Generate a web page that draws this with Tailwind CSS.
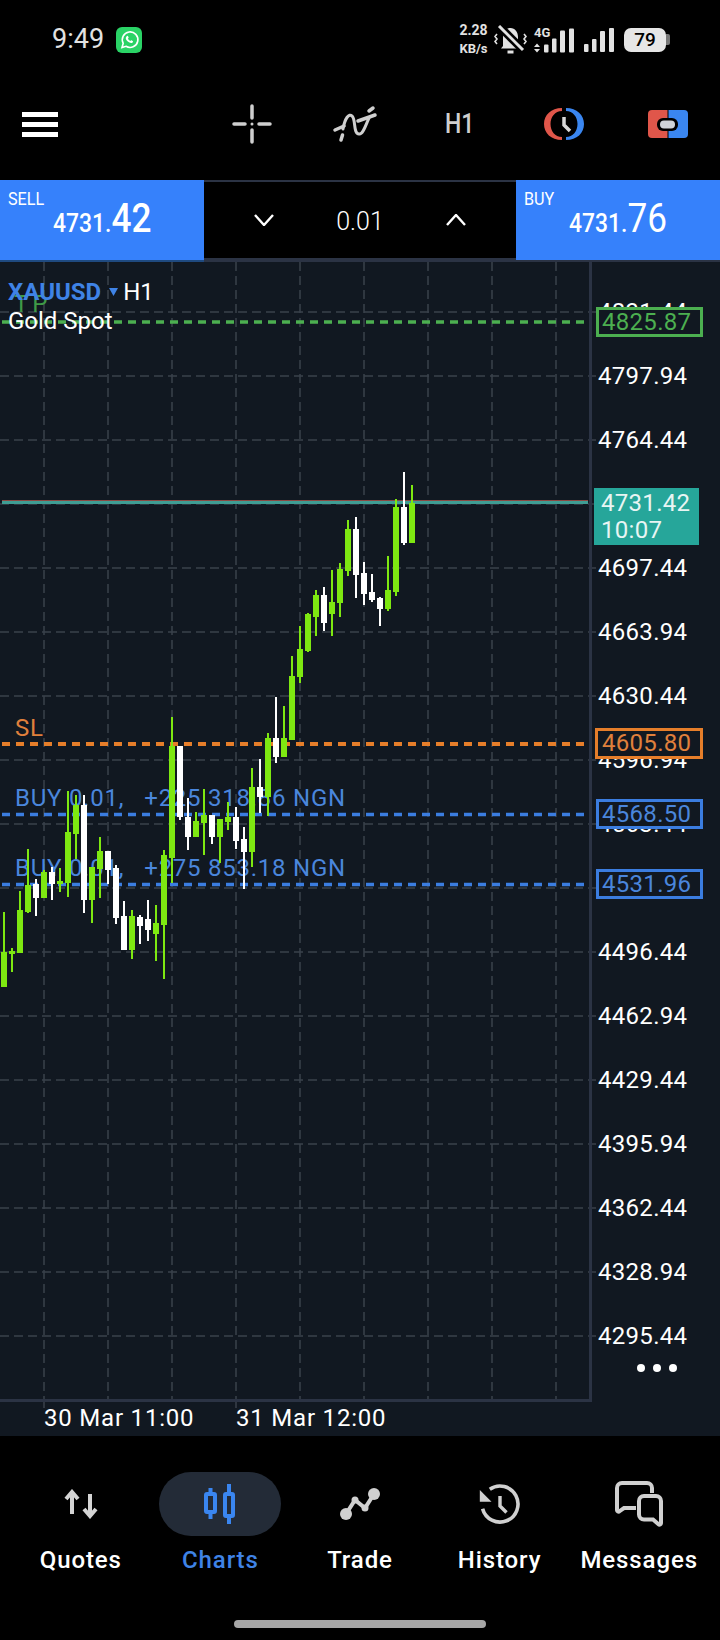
<!DOCTYPE html>
<html lang="en">
<head>
    <meta charset="UTF-8">
    <meta name="viewport" content="width=device-width, initial-scale=1.0">
    <title>XAUUSD H1 Chart</title>
    <script src="https://cdn.jsdelivr.net/npm/@tailwindcss/browser@4"></script>
</head>
<body class="w-[720px] h-[1640px] overflow-hidden bg-black text-white font-['Roboto',sans-serif]">
    <!-- Status bar -->
    <div class="h-[68px] flex items-center justify-between pl-[52px] pr-[50px] pt-[11px] text-[#e2e2e2]">
        <div class="flex items-center gap-[12px]">
            <span class="text-[27px] leading-none">9:49</span>
            <svg width="26" height="26" viewBox="0 0 26 26">
                <rect width="26" height="26" rx="6" fill="#2ad366"/>
                <path d="M6 20.5l1.2-4.2A7.8 7.8 0 1 1 10 19.3z" fill="none" stroke="#fff" stroke-width="1.6"/>
                <path d="M10.5 9.5c.6-1 1.4-.8 1.7 0l.4 1c.1.4-.5 1-.7 1.3.5 1 1.3 1.8 2.4 2.3.4-.3.8-.9 1.2-.8l1.2.6c.5.3.4 1-.1 1.5-1 1-3 .6-4.8-.8-1.9-1.5-2.8-3.7-1.3-5.1z" fill="#fff"/>
            </svg>
        </div>
        <div class="flex items-center">
            <div class="w-[29px] text-[14px] leading-[18px] font-bold text-center">2.28<br><span class="text-[13px]">KB/s</span></div>
            <svg class="ml-[6px]" width="33" height="30" viewBox="0 0 33 30" fill="none" stroke="#e2e2e2">
                <path d="M9 21v-9c0-5 3-9 7.500-9S24 7 24 12v9l2 2.500H7z" fill="#e2e2e2" stroke="none"/>
                <path d="M13.500 27h6" stroke-width="3"/>
                <path d="M5 1l24 24" stroke="#000" stroke-width="8"/>
                <path d="M5 1l24 24" stroke-width="3"/>
                <path d="M3 9l-2 2.500 2 2.500-2 2.500 2 2.500M30 9l2 2.500-2 2.500 2 2.500-2 2.500" stroke-width="1.6"/>
            </svg>
            <div class="relative ml-[7px] w-[42px] h-[28px]">
                <span class="absolute left-0 top-0 text-[13px] font-bold leading-none">4G</span>
                <svg width="42" height="28" viewBox="0 0 42 28" fill="#e2e2e2">
                    <path d="M3 17.500l3 3.500H0zM3 26.500L0 23h6z"/>
                    <rect x="10" y="18.500" width="4.500" height="8" rx="1"/>
                    <rect x="18" y="12.500" width="4.500" height="14" rx="1"/>
                    <rect x="26" y="4.500" width="5" height="22" rx="1"/>
                    <rect x="35" y="2.500" width="5" height="24" rx="1"/>
                </svg>
            </div>
            <svg class="ml-[8px]" width="31" height="25" viewBox="0 0 31 25" fill="#e2e2e2">
                <rect x="0" y="17" width="4.500" height="8" rx="1"/>
                <rect x="8" y="12" width="4.500" height="13" rx="1"/>
                <rect x="16" y="4" width="5" height="21" rx="1"/>
                <rect x="25" y="1" width="5" height="24" rx="1"/>
            </svg>
            <div class="ml-[9px] flex items-center">
                <div class="w-[42px] h-[24px] rounded-[7px] bg-[#e6e6e6] text-black text-[19px] font-medium leading-[24px] text-center">79</div>
                <div class="w-[4px] h-[11px] rounded-r-[2px] bg-[#777]"></div>
            </div>
        </div>
    </div>

    <!-- Toolbar -->
    <div class="relative h-[112px]">
        <div class="absolute left-[22px] top-[44px] w-[36px] flex flex-col gap-[5px]">
            <div class="h-[5px] bg-white"></div>
            <div class="h-[5px] bg-white"></div>
            <div class="h-[5px] bg-white"></div>
        </div>
        <svg class="absolute left-[232px] top-[36px]" width="40" height="40" viewBox="0 0 40 40" fill="none" stroke="#cfcfcf" stroke-width="3.500" stroke-linecap="round">
            <path d="M20 2v12M20 26v12M2 20h11M27 20h11"/>
            <circle cx="20" cy="20" r="1.500" fill="#cfcfcf" stroke="none"/>
        </svg>
        <svg class="absolute left-[332px] top-[36px]" width="46" height="40" viewBox="0 0 46 40" fill="none" stroke="#cfcfcf" stroke-width="3.500" stroke-linecap="round">
            <path d="M3 26l9-4M26 17l17-6M37 7l4-3M9 36l1.500-5"/>
            <path d="M11 25C13 14 17 9 20 12c4 3 1 18 7 18 4 1 7-10 10-16" stroke-width="3"/>
        </svg>
        <div class="absolute left-[445px] top-[42px] text-[28px] leading-[28px] font-medium text-[#cfcfcf] scale-x-[0.82] origin-left">H1</div>
        <svg class="absolute left-[543px] top-[38px]" width="42" height="36" viewBox="0 0 42 36">
            <path d="M19 2C8 2 1 9 1 18s7 16 18 16v-3C12 31 7.500 25 7.500 18S12 5 19 5z" fill="#e0564a"/>
            <path d="M23 2c11 0 18 7 18 16s-7 16-18 16v-3c7 0 11.500-6 11.500-13S30 5 23 5z" fill="#3a86f0"/>
            <path d="M21 11v8l6 6" fill="none" stroke="#d8d8d8" stroke-width="3.500"/>
        </svg>
        <svg class="absolute left-[648px] top-[42px]" width="40" height="28" viewBox="0 0 40 28">
            <path d="M4 0h15.500v28H4a4 4 0 0 1-4-4V4a4 4 0 0 1 4-4z" fill="#e0564a"/>
            <path d="M20.500 0H36a4 4 0 0 1 4 4v20a4 4 0 0 1-4 4H20.500z" fill="#3a86f0"/>
            <rect x="9" y="8" width="21" height="13" rx="6" fill="#000"/>
            <rect x="12" y="10.500" width="15" height="8" rx="4" fill="#cfd3d8"/>
        </svg>
    </div>

    <!-- Trade bar -->
    <div class="h-[80px] flex">
        <div class="relative w-[204px] bg-[#3681fb]">
            <div class="absolute left-[8px] top-[8px] text-[19px] leading-[21px] scale-x-[0.85] origin-left">SELL</div>
            <div class="absolute left-[53px] top-[17px] flex items-baseline scale-x-[0.88] origin-left whitespace-nowrap">
                <span class="text-[26px] font-medium leading-[44px]">4731.</span><span class="text-[40px] font-medium leading-[44px]">42</span>
            </div>
        </div>
        <div class="flex-1 bg-black border-t-2 border-b-2 border-[#2b3344] flex items-center justify-between px-[50px]">
            <svg width="20" height="12" viewBox="0 0 20 12" fill="none" stroke="#fff" stroke-width="2.400"><path d="M1 1l9 10 9-10"/></svg>
            <span class="pt-[3px] text-[25px] font-light leading-none">0.01</span>
            <svg width="20" height="12" viewBox="0 0 20 12" fill="none" stroke="#fff" stroke-width="2.400"><path d="M1 11l9-10 9 10"/></svg>
        </div>
        <div class="relative w-[204px] bg-[#3681fb]">
            <div class="absolute left-[8px] top-[8px] text-[19px] leading-[21px] scale-x-[0.85] origin-left">BUY</div>
            <div class="absolute left-[53px] top-[17px] flex items-baseline scale-x-[0.88] origin-left whitespace-nowrap">
                <span class="text-[26px] font-medium leading-[44px]">4731.</span><span class="text-[40px] leading-[44px]">76</span>
            </div>
        </div>
    </div>

    <!-- Chart -->
    <div class="relative h-[1176px] bg-[#111821]">
        <svg id="chart" class="absolute inset-0" width="720" height="1176" viewBox="0 260 720 1176"></svg>

        <!-- Price axis labels -->
        <div class="absolute left-[598px] top-[20px] flex flex-col text-[24px] tracking-[0.3px] text-white">
            <div class="h-16 flex items-center">4831.44</div>
            <div class="h-16 flex items-center">4797.94</div>
            <div class="h-16 flex items-center">4764.44</div>
            <div class="h-16 flex items-center">4730.94</div>
            <div class="h-16 flex items-center">4697.44</div>
            <div class="h-16 flex items-center">4663.94</div>
            <div class="h-16 flex items-center">4630.44</div>
            <div class="h-16 flex items-center">4596.94</div>
            <div class="h-16 flex items-center">4563.44</div>
            <div class="h-16 flex items-center">4529.94</div>
            <div class="h-16 flex items-center">4496.44</div>
            <div class="h-16 flex items-center">4462.94</div>
            <div class="h-16 flex items-center">4429.44</div>
            <div class="h-16 flex items-center">4395.94</div>
            <div class="h-16 flex items-center">4362.44</div>
            <div class="h-16 flex items-center">4328.94</div>
            <div class="h-16 flex items-center">4295.44</div>
        </div>

        <!-- Price tags over the axis -->
        <div class="absolute left-[596px] top-[47px] w-[107px] h-[30px] border-[3px] border-[#4caf50] bg-[#111821] text-[#4caf50] text-[24px] tracking-[0.3px] leading-[24px] pl-[3px]">4825.87</div>
        <div class="absolute left-[594px] top-[228px] w-[105px] h-[57px] bg-[#26a69a] text-[#e8f5f3] text-[24px] tracking-[0.3px] leading-[27px] pl-[7px] pt-[2px]">4731.42<br>10:07</div>
        <div class="absolute left-[595px] top-[468px] w-[108px] h-[31px] border-[3px] border-[#e67e2a] bg-[#111821] text-[#e0803c] text-[24px] tracking-[0.3px] leading-[25px] pl-[4px]">4605.80</div>
        <div class="absolute left-[596px] top-[539px] w-[107px] h-[30px] border-[3px] border-[#3b7de0] bg-[#111821] text-[#4a86dc] text-[24px] tracking-[0.3px] leading-[24px] pl-[3px]">4568.50</div>
        <div class="absolute left-[596px] top-[609px] w-[107px] h-[30px] border-[3px] border-[#3b7de0] bg-[#111821] text-[#4a86dc] text-[24px] tracking-[0.3px] leading-[24px] pl-[3px]">4531.96</div>

        <!-- Symbol caption -->
        <div class="absolute left-[8px] top-[18px] flex items-center h-[28px]">
            <span class="text-[24px] font-bold text-[#3f83e6] leading-none">XAUUSD</span>
            <svg class="ml-[8px]" width="9" height="8" viewBox="0 0 9 8" fill="#3f83e6"><path d="M0 0h9L4.500 8z"/></svg>
            <span class="ml-[5px] text-[24px] leading-none">H1</span>
        </div>
        <div class="absolute left-[8px] top-[47px] text-[24px] leading-[28px]">Gold Spot</div>

        <!-- Time axis -->
        <div class="absolute left-[44px] top-[1145px] text-[24px] leading-[26px] tracking-[0.8px]">30 Mar 11:00</div>
        <div class="absolute left-[236px] top-[1145px] text-[24px] leading-[26px] tracking-[0.8px]">31 Mar 12:00</div>

        <div class="absolute left-[637px] top-[1104px] flex gap-[8px]">
            <div class="w-[8px] h-[8px] rounded-full bg-white"></div>
            <div class="w-[8px] h-[8px] rounded-full bg-white"></div>
            <div class="w-[8px] h-[8px] rounded-full bg-white"></div>
        </div>
    </div>

    <!-- Bottom nav -->
    <div class="relative h-[204px]">
        <div class="grid grid-cols-5 px-[11px] pt-[36px]">
            <div class="flex flex-col items-center">
                <div class="h-[64px] flex items-center justify-center">
                    <svg width="34" height="30" viewBox="0 0 34 30" fill="none" stroke="#d4d4d4" stroke-width="4">
                        <path d="M8 25V3M2 10l6-7 6 7"/>
                        <path d="M26 5v22M20 20l6 7 6-7"/>
                    </svg>
                </div>
                <span class="mt-[10px] text-[24px] font-medium tracking-[0.9px] leading-[28px] text-white">Quotes</span>
            </div>
            <div class="flex flex-col items-center">
                <div class="w-[122px] h-[64px] rounded-[32px] bg-[#232b37] flex items-center justify-center">
                    <svg width="32" height="40" viewBox="0 0 32 40" fill="none" stroke="#3a86f0" stroke-width="4">
                        <rect x="2" y="10" width="9" height="18" rx="1"/>
                        <rect x="21" y="10" width="8" height="22" rx="1"/>
                        <path d="M6.500 4v6M6.500 28v7M25 0v10M25 32v8"/>
                    </svg>
                </div>
                <span class="mt-[10px] text-[24px] font-medium tracking-[0.9px] leading-[28px] text-[#3f83e6]">Charts</span>
            </div>
            <div class="flex flex-col items-center">
                <div class="h-[64px] flex items-center justify-center">
                    <svg width="40" height="34" viewBox="0 0 40 34" fill="#d0d0d0" stroke="none">
                        <path d="M6 27l9-14 10 8 9-14" fill="none" stroke="#d0d0d0" stroke-width="4"/>
                        <circle cx="6" cy="27" r="6"/>
                        <circle cx="34" cy="7" r="6"/>
                        <circle cx="15" cy="13" r="3.500"/>
                        <circle cx="25" cy="21" r="3.500"/>
                    </svg>
                </div>
                <span class="mt-[10px] text-[24px] font-medium tracking-[0.9px] leading-[28px] text-white">Trade</span>
            </div>
            <div class="flex flex-col items-center">
                <div class="h-[64px] flex items-center justify-center">
                    <svg width="42" height="42" viewBox="0 0 42 42" fill="none" stroke="#d0d0d0" stroke-width="3.600">
                        <path d="M10.800 6.200A18 18 0 1 1 3.600 25.700"/>
                        <path d="M.8 7v11.700h11.700z" fill="#d0d0d0" stroke="none"/>
                        <path d="M21 13v10l6.500 6.500" stroke-width="3.400"/>
                    </svg>
                </div>
                <span class="mt-[10px] text-[24px] font-medium tracking-[0.9px] leading-[28px] text-white">History</span>
            </div>
            <div class="flex flex-col items-center">
                <div class="h-[64px] flex items-center justify-center">
                    <svg width="48" height="46" viewBox="0 0 48 46" fill="none" stroke="#d0d0d0" stroke-width="4">
                        <path d="M37 12V7a5 5 0 0 0-5-5H7a5 5 0 0 0-5 5v22a1.500 1.500 0 0 0 2.500 1.200L9 27h12"/>
                        <path d="M29 15h12a5 5 0 0 1 5 5v22a1.500 1.500 0 0 1-2.500 1.200L38 38.500h-9a5 5 0 0 1-5-5V20a5 5 0 0 1 5-5z"/>
                    </svg>
                </div>
                <span class="mt-[10px] text-[24px] font-medium tracking-[0.9px] leading-[28px] text-white">Messages</span>
            </div>
        </div>
        <div class="absolute left-[234px] top-[184px] w-[252px] h-[8px] rounded-full bg-[#a6a6a6]"></div>
    </div>

    <script>
        // candle: [x, wickTop, wickBottom, bodyTop, bodyBottom, white?]
        const candles = [
            [4,912,987,952,987,0],[12,948,972,951,954,0],[20,891,953,910,953,0],[28,849,913,885,912,0],
            [36,879,916,884,898,1],[44,870,898,872,898,0],[52,867,900,872,884,1],[60,868,892,881,884,0],
            [68,791,897,832,883,0],[76,795,859,805,834,0],[84,795,913,805,900,1],[92,867,923,867,900,0],
            [100,837,898,851,869,0],[108,851,884,851,870,1],[116,865,924,868,918,1],[124,901,950,916,950,1],
            [132,910,959,916,950,0],[140,915,944,917,926,1],[148,900,941,919,930,1],[156,905,961,923,934,0],
            [164,850,979,855,925,0],[172,717,883,746,858,0],[180,746,820,746,817,1],[188,798,850,817,837,1],
            [196,812,837,821,837,0],[204,789,855,815,823,0],[212,815,844,815,837,1],[220,819,863,819,837,0],
            [228,802,830,817,822,0],[236,807,849,817,841,1],[244,827,889,839,852,1],[252,768,867,787,852,0],
            [260,759,813,787,797,1],[268,733,816,738,797,0],[276,697,763,738,757,1],[284,706,757,738,757,0],
            [292,656,740,676,740,0],[300,626,683,649,677,0],[308,613,652,614,651,0],[316,590,636,595,617,0],
            [324,587,631,595,623,1],[332,570,636,602,614,0],[340,563,617,569,603,0],[348,520,576,529,571,0],
            [356,517,598,529,575,1],[364,562,605,573,594,1],[372,574,602,592,600,1],[380,597,626,598,609,1],
            [388,556,611,590,609,0],[396,499,596,507,592,0],[404,472,545,507,543,1],[412,485,543,503,543,0]
        ];

        let svg = '';
        // grid
        for (let y = 312; y <= 1336; y += 64) {
            svg += `<line x1="0" x2="590" y1="${y}" y2="${y}" stroke="#3a414b" stroke-width="1.500" stroke-dasharray="9 5"/>`;
            svg += `<line x1="590" x2="596" y1="${y}" y2="${y}" stroke="#3a414b" stroke-width="1.500"/>`;
        }
        for (let x = 44; x <= 556; x += 64) {
            svg += `<line x1="${x}" x2="${x}" y1="262" y2="1400" stroke="#3a414b" stroke-width="1.500" stroke-dasharray="9 5"/>`;
        }
        svg += `<line x1="44" x2="44" y1="1400" y2="1408" stroke="#3a414b" stroke-width="1.500"/>`;
        svg += `<line x1="236" x2="236" y1="1400" y2="1408" stroke="#3a414b" stroke-width="1.500"/>`;
        // frame
        svg += `<rect x="0" y="260" width="204" height="2" fill="#1f4a80"/>`;
        svg += `<rect x="204" y="260" width="516" height="2" fill="#2b3344"/>`;
        svg += `<rect x="589" y="260" width="3" height="1142" fill="#2b3344"/>`;
        svg += `<rect x="0" y="1399" width="592" height="3" fill="#2b3344"/>`;
        // order labels
        const label = (x, y, fill, text, sp) => `<text x="${x}" y="${y}" fill="${fill}" font-family="Roboto" font-size="24" letter-spacing="${sp}">${text}</text>`;
        svg += label(14, 312, '#3f9a47', 'TP', 4);
        svg += label(15, 736, '#e0803c', 'SL', 0.75);
        svg += label(15, 806, '#4a86dc', 'BUY 0.01,&#160;&#160;&#160;+225 318.86 NGN', 0.75);
        svg += label(15, 876, '#4a86dc', 'BUY 0.01,&#160;&#160;&#160;+275 853.18 NGN', 0.75);
        // order lines
        const dashed = (y, c, w) => `<line x1="2" x2="586" y1="${y}" y2="${y}" stroke="${c}" stroke-width="${w}" stroke-dasharray="8 6"/>`;
        svg += dashed(322, '#4caf50', 3.5);
        svg += dashed(744, '#e67e2a', 4);
        svg += dashed(814.5, '#3b7de0', 3.5);
        svg += dashed(884.5, '#3b7de0', 3.5);
        // price line
        svg += `<rect x="2" y="500" width="586" height="1" fill="#8a4a44"/>`;
        svg += `<rect x="2" y="501" width="586" height="3" fill="#3f9d94"/>`;
        // candles
        candles.forEach(([x, wt, wb, bt, bb, white]) => {
            const c = white ? '#ffffff' : '#7ee811';
            svg += `<rect x="${x - 1}" y="${wt}" width="2" height="${wb - wt}" fill="${c}"/>`;
            svg += `<rect x="${x - 3}" y="${bt}" width="6" height="${bb - bt}" fill="${c}"/>`;
        });
        document.getElementById('chart').innerHTML = svg;
    </script>
</body>
</html>
